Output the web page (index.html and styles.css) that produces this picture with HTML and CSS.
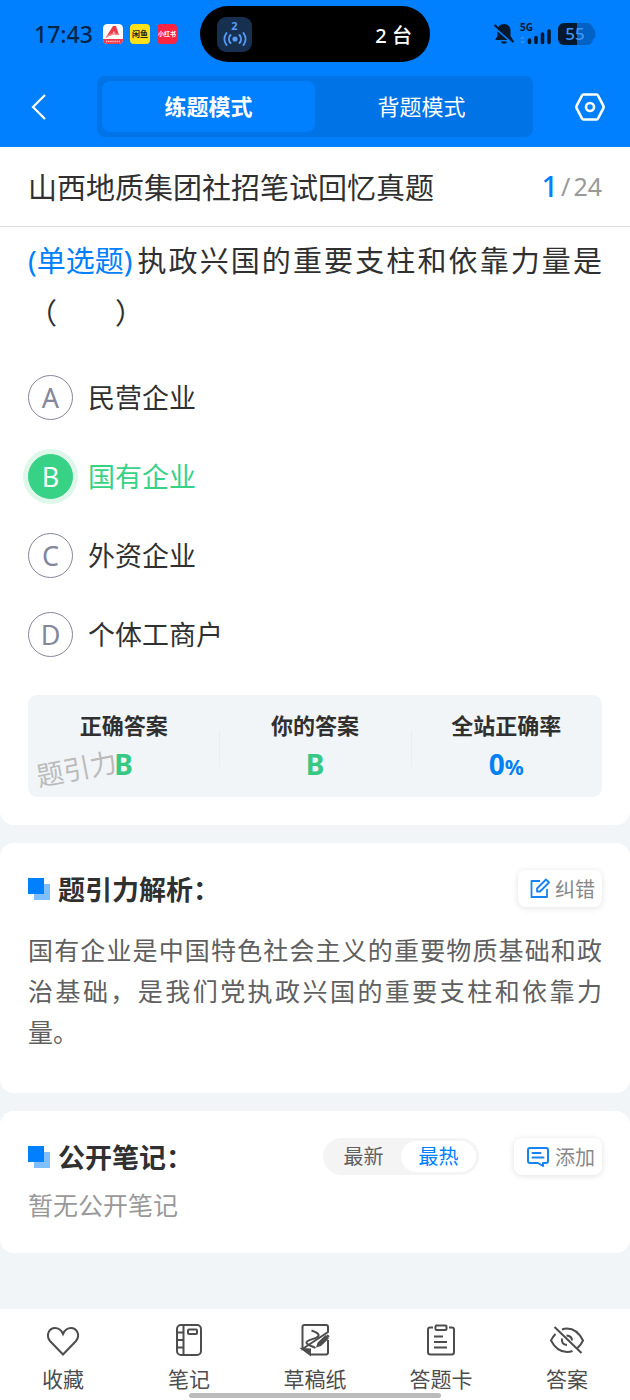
FILE: index.html
```
<!DOCTYPE html>
<html lang="zh-CN">
	<head>
		<title>练题模式</title>
		<meta charset="utf-8">
		<meta name="viewport" content="width=device-width, initial-scale=1">
		<link rel="stylesheet" href="styles.css">
	</head>
	<body>
		<header class="top">
			<div class="status">
				<div class="status-left">
					<span class="time">17:43</span>
					<svg class="app" viewBox="0 0 20 20"><rect width="20" height="20" rx="4" fill="#fff"/><path d="M0 15h20v1a4 4 0 0 1-4 4H4a4 4 0 0 1-4-4z" fill="#f0394a"/><path d="M3 13L10 2h3l3 9-4-1-1-3-2 4z" fill="#f0394a"/><path d="M3 13.500c3-3 8-4 12-3" stroke="#f58a90" stroke-width="1.500" fill="none"/><path d="M3 17.500h14" stroke="#fbb" stroke-width="1.500" stroke-dasharray="1.500 .6"/></svg>
					<span class="app app-yellow">闲鱼</span>
					<span class="app app-red">小红书</span>
				</div>
				<div class="island">
					<span class="hotspot">
						<b>2</b>
						<svg width="26" height="16" viewBox="0 0 26 16" fill="none" stroke="#5599f5" stroke-width="2" stroke-linecap="round"><circle cx="13" cy="8" r="2.600" fill="#5599f5" stroke="none"/><path d="M8.500 4a6 6 0 0 0 0 8M17.500 4a6 6 0 0 1 0 8M4.500 2a10 10 0 0 0 0 12M21.500 2a10 10 0 0 1 0 12"/></svg>
					</span>
					<span>2 台</span>
				</div>
				<div class="status-right">
					<svg width="20" height="22" viewBox="0 0 20 22"><path d="M10 1c-4 0-6.500 3-6.500 6.500V13L1.500 16v1h17v-1l-2-3V7.500C16.500 4 14 1 10 1zM7 18.500h6c-.5 3-5.500 3-6 0z" fill="#04182e"/><path d="M-.5 3.500L19 20.500" stroke="#0080ff" stroke-width="2"/><path d="M.5 2L19.500 19" stroke="#04182e" stroke-width="2"/></svg>
					<svg class="signal" width="34" height="32" viewBox="0 -4 34 32"><text x="1" y="9" font-size="10">5G</text><path d="M1 17l2.500-3 2.500 3zM1 19l2.500 3 2.500-3z" fill="#2a8df0"/><g stroke="#04182e" stroke-width="3.600" stroke-linecap="round"><path d="M10.500 18v2.500M17 15.500v5M23.500 12v8.500M30 9v11.500"/></g></svg>
					<svg class="battery" width="38" height="22" viewBox="0 0 38 22"><path d="M19 0h10a6 6 0 0 1 6 5.500q2.500 1 2.500 5.500T35 16.500A6 6 0 0 1 29 22H19z" fill="#0062c4"/><path d="M19 0H6a6 6 0 0 0-6 6v10a6 6 0 0 0 6 6h13z" fill="#04182e"/><text x="17" y="17" font-size="17" text-anchor="middle">55</text></svg>
				</div>
			</div>
			<nav class="nav">
				<button class="icon-btn back" aria-label="返回">
					<svg width="16" height="26" viewBox="0 0 16 26" fill="none" stroke="#fff" stroke-width="2.200"><path d="M14 1L2 13l12 12"/></svg>
				</button>
				<div class="modes">
					<button class="mode active">练题模式</button>
					<button class="mode">背题模式</button>
				</div>
				<button class="icon-btn setting" aria-label="设置">
					<svg width="30" height="28" viewBox="0 0 30 28" fill="none" stroke="#fff" stroke-width="2.600" stroke-linejoin="round"><path d="M8.500 1.500h13q1 0 1.500 1l5.300 10.200q.6 1.300 0 2.600L23 25.500q-.5 1-1.500 1h-13q-1 0-1.500-1L1.700 15.300q-.6-1.300 0-2.600L7 2.500q.5-1 1.500-1z"/><circle cx="15" cy="14" r="4"/></svg>
				</button>
			</nav>
		</header>

		<main>
			<section class="card question-card">
				<div class="paper">
					<h1>山西地质集团社招笔试回忆真题</h1>
					<div class="progress"><b>1</b><i>/</i><span>24</span></div>
				</div>
				<div class="question">
					<span class="type">(单选题)</span>
					<p>执政兴国的重要支柱和依靠力量是（&#12288;&#12288;）</p>
				</div>
				<div class="options">
					<button class="option"><span class="letter">A</span>民营企业</button>
					<button class="option right"><span class="letter">B</span>国有企业</button>
					<button class="option"><span class="letter">C</span>外资企业</button>
					<button class="option"><span class="letter">D</span>个体工商户</button>
				</div>
				<div class="result">
					<span class="watermark">题引力</span>
					<div class="result-item"><h3>正确答案</h3><b>B</b></div>
					<div class="result-item"><h3>你的答案</h3><b>B</b></div>
					<div class="result-item rate"><h3>全站正确率</h3><b>0<small>%</small></b></div>
				</div>
			</section>

			<section class="card analysis">
				<div class="card-head">
					<h2>题引力解析：</h2>
					<button class="tool">
						<svg width="20" height="21" viewBox="0 0 20 21" fill="none" stroke="#1683f2" stroke-width="1.800"><path d="M10 3H1.500v16H17v-8M7 13.500v-3L16 1.500l3 3-9 9z" stroke-linejoin="round"/></svg>
						纠错
					</button>
				</div>
				<p>国有企业是中国特色社会主义的重要物质基础和政治基础，是我们党执政兴国的重要支柱和依靠力量。</p>
			</section>

			<section class="card notes">
				<div class="card-head">
					<h2>公开笔记：</h2>
					<div class="sort">
						<button>最新</button>
						<button class="active">最热</button>
					</div>
					<button class="tool">
						<svg width="24" height="20" viewBox="0 0 24 20" fill="none" stroke="#1683f2" stroke-width="2" stroke-linejoin="round" stroke-linecap="round"><path d="M12 16H4q-2 0-2-2V3q0-2 2-2h16q2 0 2 2v11q0 2-2 2h-3v3z"/><path d="M6.500 6h8M6.500 10.500h11"/></svg>
						添加
					</button>
				</div>
				<p>暂无公开笔记</p>
			</section>
		</main>

		<footer class="tabbar">
			<a href="#">
				<svg viewBox="0 0 34 34"><path d="M17 31.500L4 18C-.5 12.500 3 5 9 5c4 0 6.500 2.500 8 6 1.500-3.500 4-6 8-6 6 0 9.500 7.500 5 13z"/></svg>
				收藏
			</a>
			<a href="#">
				<svg viewBox="0 0 34 34"><rect x="5" y="2" width="24" height="30" rx="4"/><path d="M11.500 2v30M5 9.500h6.500M5 17h6.500M5 24.500h6.500"/><rect x="16" y="6.500" width="9" height="4.500" rx="1"/></svg>
				笔记
			</a>
			<a href="#">
				<svg viewBox="0 0 34 34"><path d="M12 31.500h16q2 0 2-2V17M30 9V4q0-2-2-2H6.500q-2 0-2 2v22z"/><path d="M4.500 26l7.500.5v5z" fill="#4d4d4d"/><path d="M13.500 7.500c3 1 8 3 7 5.500-1.500 3-12 3.500-12 6.500 0 2.500 4.500 3 9 5.500"/><path d="M19.500 23l1-3 7-6.500 2 2-7 6.500zM29 12l2 2" fill="#4d4d4d"/></svg>
				草稿纸
			</a>
			<a href="#">
				<svg viewBox="0 0 34 34"><path d="M9 4.500H6q-2 0-2 2V29q0 2.500 2.500 2.500h21Q30 31.500 30 29V6.500q0-2-2-2h-3"/><rect x="11.500" y="2.500" width="11" height="4.500" rx="1"/><path d="M10 13.500h9M10 19h13M10 24.500h13"/></svg>
				答题卡
			</a>
			<a href="#">
				<svg viewBox="0 0 34 34"><path d="M5.500 11Q3 13.500 1 17.500 7 29 17 29q3 0 5.500-1M12 6.500Q14.500 5.500 17 5.500q10 0 16 12Q31 22 27.500 25"/><path d="M12 15.500q-1 6 5 6.500M16.500 12.500q5.500.5 5.500 5"/><path d="M4.500 4l27 26"/></svg>
				答案
			</a>
		</footer>
	</body>
</html>
```
FILE: styles.css
```
*
{
	box-sizing: border-box;
}
body
{
	margin: 0;
	min-height: 100vh;
	display: flex;
	flex-direction: column;
	background: #f1f5f8;
	color: #303030;
	font-family: "Noto Sans", "Noto Sans CJK SC", sans-serif;
}
h1, h2, h3, p
{
	margin: 0;
}
button
{
	padding: 0;
	border: none;
	background: none;
	color: inherit;
	font-family: inherit;
	cursor: pointer;
}
svg
{
	display: block;
	flex: none;
}

/* header */
.top
{
	padding-bottom: 10px;
	background: #0080ff;
}
.status
{
	display: grid;
	grid-template-columns: 1fr 230px 1fr;
	align-items: center;
	height: 76px;
	padding-bottom: 8px;
}
.status-left
{
	display: flex;
	align-items: center;
	gap: 7px;
	padding-left: 34px;
}
.time
{
	margin-right: 3px;
	color: #04254a;
	font-size: 23px;
	font-weight: 500;
	line-height: 28px;
}
.app
{
	width: 20px;
	height: 20px;
	border-radius: 4px;
	font-weight: bold;
	line-height: 20px;
	text-align: center;
}
.app-yellow
{
	background: #ffe11a;
	color: #222;
	font-size: 8px;
}
.app-red
{
	background: #ff2442;
	color: #fff;
	font-size: 6px;
}
.island
{
	display: flex;
	align-items: center;
	justify-content: space-between;
	height: 56px;
	padding: 0 18px 0 17px;
	border-radius: 28px;
	background: #000;
	color: #fff;
	font-size: 20px;
	font-weight: 500;
}
.hotspot
{
	display: flex;
	flex-direction: column;
	align-items: center;
	width: 35px;
	height: 35px;
	padding-top: 4px;
	border-radius: 9px;
	background: #17304f;
	color: #5599f5;
}
.hotspot b
{
	font-size: 11px;
	line-height: 10px;
}
.status-right
{
	display: flex;
	align-items: center;
	justify-content: flex-end;
	gap: 5px;
	padding-right: 34px;
}
.signal text
{
	fill: #04182e;
	font-weight: bold;
}
.battery text
{
	fill: #3f97f5;
	font-weight: 500;
}
.nav
{
	display: flex;
	align-items: center;
}
.icon-btn
{
	display: flex;
	align-items: center;
	width: 97px;
	height: 61px;
}
.back
{
	padding-left: 31px;
}
.setting
{
	justify-content: flex-end;
	padding-right: 25px;
}
.modes
{
	display: flex;
	flex: 1;
	padding: 5px;
	border-radius: 8px;
	background: #0073e6;
}
.mode
{
	flex: 1;
	height: 51px;
	padding-bottom: 4px;
	border-radius: 8px;
	color: #fff;
	font-size: 22px;
}
.mode.active
{
	background: #0080ff;
	font-weight: bold;
}

/* cards */
main
{
	flex: 1;
	display: flex;
	flex-direction: column;
	gap: 18px;
}
.card
{
	padding: 27px 28px;
	border-radius: 14px;
	background: #fff;
}
.question-card
{
	padding-top: 0;
	padding-bottom: 28px;
	border-radius: 0 0 14px 14px;
}
.paper
{
	display: flex;
	align-items: center;
	justify-content: space-between;
	height: 80px;
	margin: 0 -28px;
	padding: 0 28px 2px;
	border-bottom: 1px solid #ddd;
}
.paper h1
{
	font-size: 29px;
	font-weight: normal;
}
.progress
{
	display: flex;
	align-items: center;
	gap: 3px;
	color: #999;
	font-size: 25px;
}
.progress b
{
	color: #0080ff;
	font-size: 29px;
	font-weight: 500;
}
.progress i
{
	font-style: normal;
}
.question
{
	padding-top: 8px;
	font-size: 29px;
	line-height: 52px;
	text-align: justify;
}
.type
{
	float: left;
	margin-right: 5px;
	color: #0080ff;
}
.options
{
	display: flex;
	flex-direction: column;
	align-items: flex-start;
	gap: 34px;
	margin-top: 36px;
}
.option
{
	display: flex;
	align-items: center;
	gap: 15px;
	font-size: 27px;
	line-height: 45px;
}
.letter
{
	display: flex;
	align-items: center;
	justify-content: center;
	width: 45px;
	height: 45px;
	border: 1px solid #85869c;
	border-radius: 50%;
	color: #85869c;
	font-size: 27px;
}
.right
{
	color: #37d286;
}
.right .letter
{
	border-color: #37d286;
	background: #37d286;
	box-shadow: 0 0 0 5px #dff7ea;
	color: #fff;
}
.result
{
	position: relative;
	display: flex;
	margin-top: 38px;
	padding: 15px 0 9px;
	border-radius: 9px;
	background: #f1f5f8;
}
.result-item
{
	flex: 1;
	text-align: center;
}
.result-item + .result-item
{
	background: linear-gradient(#e9edf1, #e9edf1) left center / 1px 36px no-repeat;
}
.result h3
{
	font-size: 22px;
	line-height: 30px;
}
.result b
{
	display: block;
	position: relative;
	color: #37c983;
	font-size: 28px;
	line-height: 48px;
}
.result .rate b
{
	color: #0080f5;
}
.result small
{
	font-size: 21px;
	line-height: 20px;
}
.watermark
{
	position: absolute;
	left: 8px;
	bottom: 8px;
	color: #bbb;
	font-size: 27px;
	line-height: 40px;
	transform: rotate(-11deg);
}
.card-head
{
	display: flex;
	align-items: center;
	height: 37px;
}
.card-head h2
{
	display: flex;
	align-items: center;
	gap: 8px;
	margin-right: auto;
	font-size: 27px;
	white-space: nowrap;
}
.card-head h2::before
{
	content: "";
	width: 22px;
	height: 22px;
	background: linear-gradient(#0080ff, #0080ff) left top / 16px 16px no-repeat, linear-gradient(#80bfff, #80bfff) right bottom / 16px 16px no-repeat;
}
.tool
{
	display: flex;
	align-items: center;
	gap: 5px;
	height: 37px;
	padding: 0 7px 0 12px;
	border-radius: 8px;
	box-shadow: 0 1px 6px rgba(0, 0, 0, .12);
	color: #888;
	font-size: 20px;
}
.analysis p
{
	padding: 23px 0 13px;
	color: #606060;
	font-size: 25px;
	line-height: 41px;
	text-align: justify;
}
.notes p
{
	padding-top: 10px;
	color: #999;
	font-size: 25px;
	line-height: 41px;
}
.sort
{
	display: flex;
	margin-right: 35px;
	padding: 3px;
	border-radius: 19px;
	background: #f4f4f4;
}
.sort button
{
	width: 75px;
	height: 31px;
	border-radius: 16px;
	color: #606060;
	font-size: 20px;
	line-height: 31px;
}
.sort .active
{
	background: #fff;
	color: #0080ff;
}

/* bottom bar */
.tabbar
{
	position: relative;
	display: flex;
	height: 91px;
	padding-top: 14px;
	background: #fff;
}
.tabbar a
{
	flex: 1;
	display: flex;
	flex-direction: column;
	align-items: center;
	gap: 5px;
	color: #4d4d4d;
	font-size: 21px;
	line-height: 34px;
	text-decoration: none;
}
.tabbar svg
{
	width: 34px;
	height: 34px;
	fill: none;
	stroke: #4d4d4d;
	stroke-width: 2;
}
.tabbar::after
{
	content: "";
	position: absolute;
	left: 30%;
	right: 30%;
	bottom: 2px;
	height: 5px;
	border-radius: 3px;
	background: #bbb;
}
```
